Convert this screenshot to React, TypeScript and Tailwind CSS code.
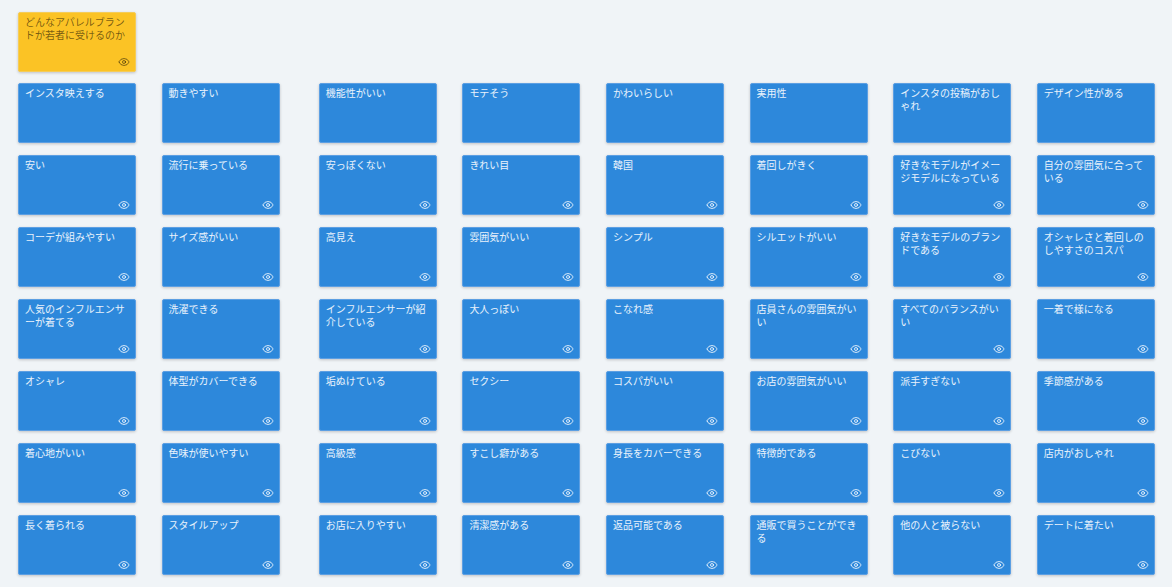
import React from 'react';
import { Eye } from 'lucide-react';

const ROWS: string[][] = [
  ['インスタ映えする', '動きやすい', '機能性がいい', 'モテそう', 'かわいらしい', '実用性', 'インスタの投稿がおしゃれ', 'デザイン性がある'],
  ['安い', '流行に乗っている', '安っぽくない', 'きれい目', '韓国', '着回しがきく', '好きなモデルがイメージモデルになっている', '自分の雰囲気に合っている'],
  ['コーデが組みやすい', 'サイズ感がいい', '高見え', '雰囲気がいい', 'シンプル', 'シルエットがいい', '好きなモデルのブランドである', 'オシャレさと着回しのしやすさのコスパ'],
  ['人気のインフルエンサーが着てる', '洗濯できる', 'インフルエンサーが紹介している', '大人っぽい', 'こなれ感', '店員さんの雰囲気がいい', 'すべてのバランスがいい', '一着で様になる'],
  ['オシャレ', '体型がカバーできる', '垢ぬけている', 'セクシー', 'コスパがいい', 'お店の雰囲気がいい', '派手すぎない', '季節感がある'],
  ['着心地がいい', '色味が使いやすい', '高級感', 'すこし癖がある', '身長をカバーできる', '特徴的である', 'こびない', '店内がおしゃれ'],
  ['長く着られる', 'スタイルアップ', 'お店に入りやすい', '清潔感がある', '返品可能である', '通販で買うことができる', '他の人と被らない', 'デートに着たい'],
];

const Card: React.FC<{ label: string; hasEye?: boolean; className?: string }> = ({ label, hasEye = true, className = '' }) => (
  <div className={`flex h-[60px] w-[118px] shrink-0 flex-col justify-between rounded-[2px] border border-[#5c9fe3] bg-[#2d88db] pl-[6px] pr-[5px] pt-[2px] pb-[3px] text-white/90 shadow-[0_1px_3px_rgba(0,0,0,0.2)] ${className}`}>
    <p className="text-[10px] leading-[13px] break-all">{label}</p>
    {hasEye && <Eye size={12} strokeWidth={1.75} className="self-end" />}
  </div>
);

export default function App() {
  return (
    <div
      className="flex h-[587px] w-[1172px] flex-col overflow-hidden bg-[#f0f4f7] pl-[18px] pt-[12px]"
      style={{ fontFamily: '"Noto Sans CJK JP", "Liberation Sans", sans-serif' }}
    >
      <div className="mb-[11px] flex h-[60px] w-[118px] flex-col justify-between rounded-[2px] border border-[#f5cc58] bg-[#fbc325] pl-[6px] pr-[5px] pt-[2px] pb-[3px] text-black/55 shadow-[0_1px_3px_rgba(0,0,0,0.2)]">
        <p className="text-[10px] leading-[13px] break-all">どんなアパレルブランドが若者に受けるのか</p>
        <Eye size={12} strokeWidth={1.75} className="self-end" />
      </div>
      <div className="flex flex-col gap-[12px]">
        {ROWS.map((row, r) => (
          <div key={r} className="flex gap-[25.6px]">
            {row.map((label, c) => (
              <Card key={label} label={label} hasEye={r > 0} className={c === 2 ? 'ml-[13.6px]' : ''} />
            ))}
          </div>
        ))}
      </div>
    </div>
  );
}
